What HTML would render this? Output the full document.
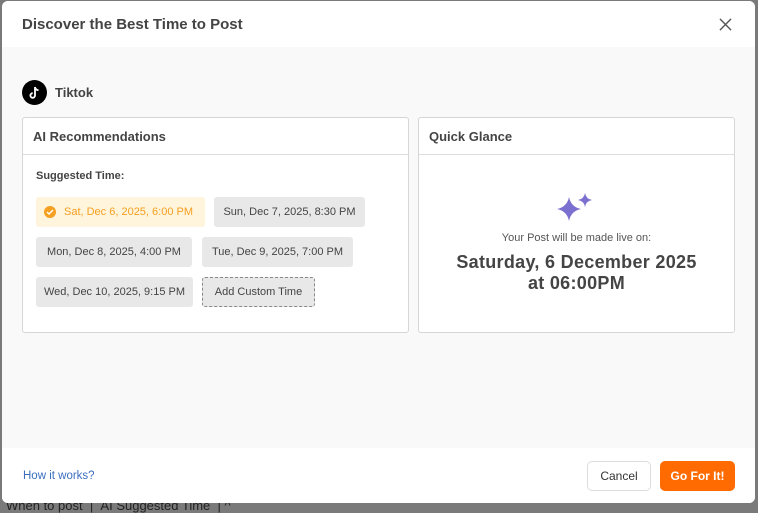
<!DOCTYPE html>
<html><head><style>
*{box-sizing:border-box;margin:0;padding:0}
body{width:758px;height:508px;background:#7a7a7a;font-family:"Liberation Sans",sans-serif;position:relative;overflow:hidden;color:#333}
.bg{position:absolute;top:499px;font-size:13px;color:#222;left:6px;line-height:14px}
.modal{position:absolute;left:2px;top:1px;width:753px;height:502px;background:#f9f9f9;border-radius:6px;overflow:hidden}
.hdr{height:46px;background:#fff;padding:15px 20px;font-size:15px;font-weight:bold;color:#444;position:relative}
.x{position:absolute;right:23px;top:17px}
.tt{position:absolute;left:20px;top:79px;display:flex;align-items:center;font-size:13px;font-weight:bold;color:#444}
.tt .ic{width:25px;height:25px;border-radius:50%;background:#000;margin-right:8px;display:flex;align-items:center;justify-content:center}
.card{position:absolute;background:#fff;border:1px solid #d6d6d6;border-radius:3px}
.ch{height:37px;border-bottom:1px solid #ddd;padding:11px 10px;font-size:13px;font-weight:bold;color:#444}
.chip{position:absolute;height:30px;background:#e8e8e8;border-radius:3px;font-size:11px;color:#444;line-height:30px;text-align:center;white-space:nowrap}
.foot{position:absolute;left:0;top:447px;width:100%;height:55px;background:#fff}
</style></head><body>
<div class="bg">When to post &nbsp;| &nbsp;AI Suggested Time &nbsp;| ^</div>
<div class="modal">
<div class="hdr">Discover the Best Time to Post
<svg class="x" width="13" height="13" viewBox="0 0 14 14"><path d="M1 1L13 13M13 1L1 13" stroke="#555" stroke-width="1.5"/></svg></div>
<div class="tt"><div class="ic"><svg width="13" height="14" viewBox="0 0 13 14"><path d="M7 1v8.5a2.3 2.3 0 1 1-2.3-2.3M7 1c.3 2 1.6 3 3.5 3.2" stroke="#fff" stroke-width="1.8" fill="none"/></svg></div>Tiktok</div>
<div class="card" style="left:20px;top:116px;width:387px;height:216px">
<div class="ch">AI Recommendations</div>
<div style="position:absolute;left:13px;top:52px;font-size:11px;font-weight:bold;color:#444">Suggested Time:</div>
<div class="chip" style="left:13px;top:79px;width:169px;background:#fff4dc;color:#f5a020;padding-left:16px"><span style="position:absolute;left:8px;top:9px;width:12px;height:12px;border-radius:50%;background:#f5a020"></span><svg style="position:absolute;left:10px;top:12px" width="8" height="6"><path d="M1 3l2 2 4-4" stroke="#fff" stroke-width="1.4" fill="none"/></svg>Sat, Dec 6, 2025, 6:00 PM</div>
<div class="chip" style="left:191px;top:79px;width:151px">Sun, Dec 7, 2025, 8:30 PM</div>
<div class="chip" style="left:13px;top:119px;width:156px">Mon, Dec 8, 2025, 4:00 PM</div>
<div class="chip" style="left:179px;top:119px;width:151px">Tue, Dec 9, 2025, 7:00 PM</div>
<div class="chip" style="left:13px;top:159px;width:157px">Wed, Dec 10, 2025, 9:15 PM</div>
<div class="chip" style="left:179px;top:159px;width:113px;border:1px dashed #888;line-height:28px">Add Custom Time</div>
</div>
<div class="card" style="left:416px;top:116px;width:317px;height:216px">
<div class="ch">Quick Glance</div>
<svg style="position:absolute;left:137px;top:74px" width="42" height="32" viewBox="0 0 42 32"><path d="M13 5Q15 15 25 17Q15 19 13 29Q11 19 1 17Q11 15 13 5Z" fill="#7b6fd0"/><path d="M29 1Q30 7 36 8Q30 9 29 15Q28 9 22 8Q28 7 29 1Z" fill="#7b6fd0"/></svg>
<div style="position:absolute;top:114px;width:100%;text-align:center;font-size:11px;color:#555">Your Post will be made live on:</div>
<div style="position:absolute;top:134px;width:100%;text-align:center;font-size:18px;font-weight:bold;color:#444;line-height:21px;letter-spacing:0.3px">Saturday, 6 December 2025<br>at 06:00PM</div>
</div>
<div class="foot">
<div style="position:absolute;left:21px;top:22px;font-size:11.5px;color:#3a6fc0">How it works?</div>
<div style="position:absolute;left:585px;top:13px;width:64px;height:30px;border:1px solid #ddd;border-radius:5px;font-size:12px;text-align:center;line-height:28px;color:#333">Cancel</div>
<div style="position:absolute;left:658px;top:13px;width:75px;height:30px;background:#ff6b00;border-radius:5px;font-size:12px;font-weight:bold;text-align:center;line-height:30px;color:#fff">Go For It!</div>
</div>
</div>
</body></html>
